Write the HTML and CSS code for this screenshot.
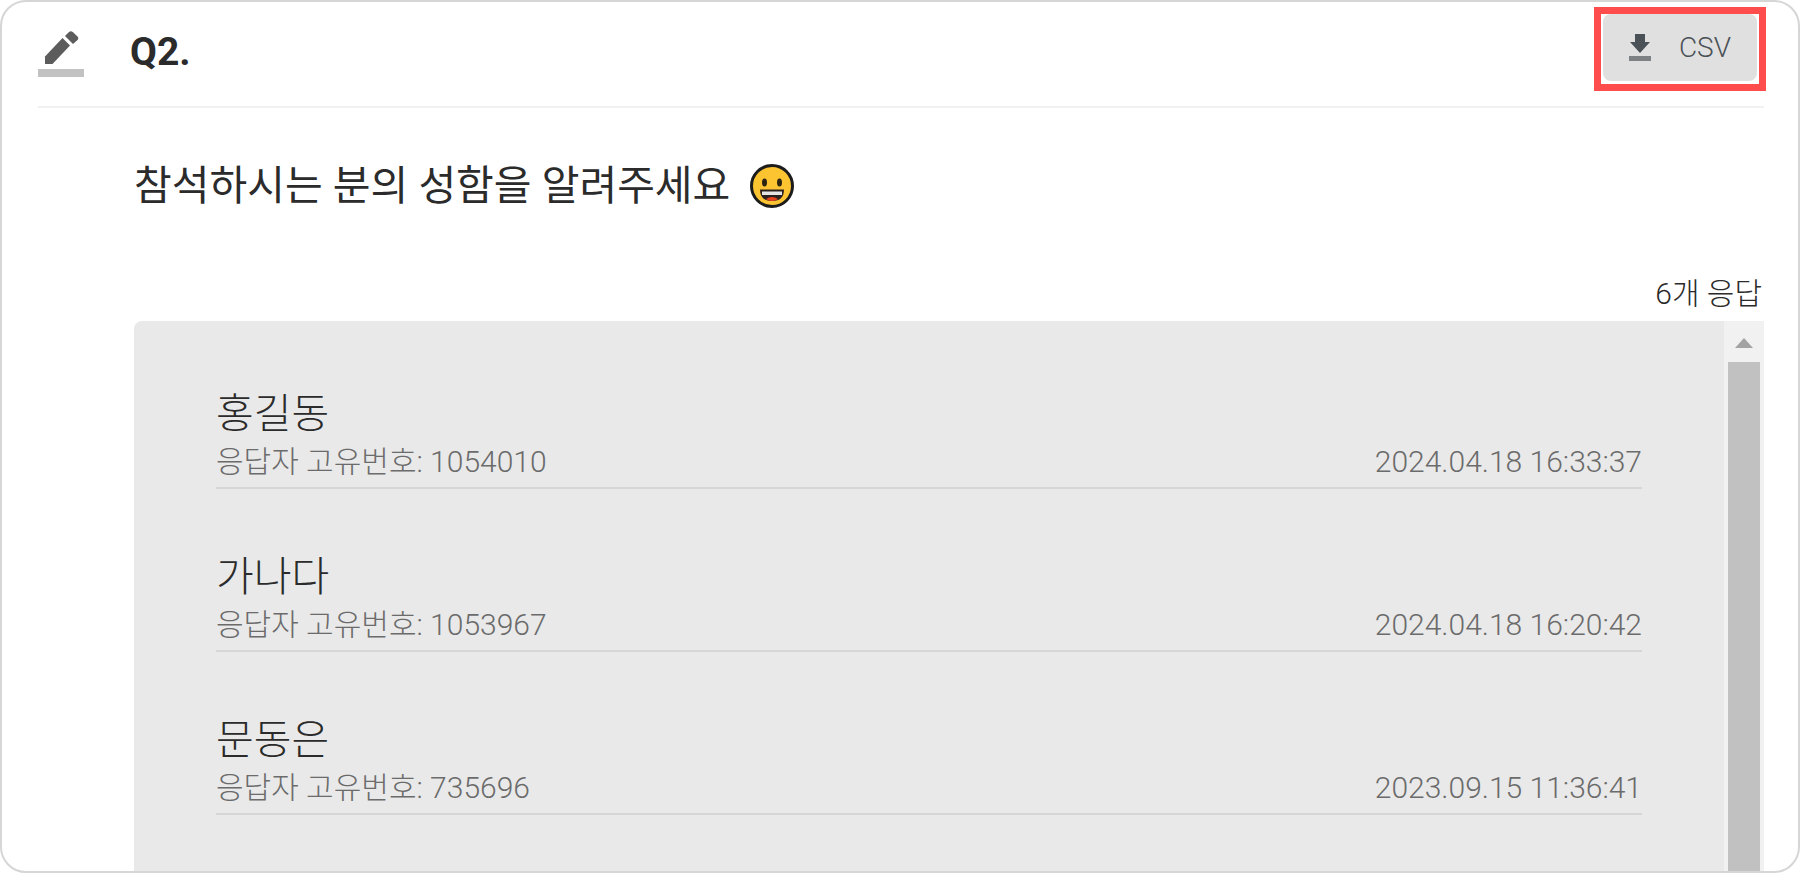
FILE: index.html
```html
<!DOCTYPE html>
<html lang="ko">
<head>
    <meta charset="UTF-8">
    <meta name="viewport" content="width=device-width, initial-scale=1.0">
    <title>Q2. 응답 결과</title>
    <link rel="stylesheet" href="styles.css">
</head>
<body>
    <main class="card">
        <header class="card-header">
            <svg class="type-icon" viewBox="0 0 46 46" aria-hidden="true">
                <path fill="#5c5c5c" d="M7 25.500 24.500 7 32 14.500 14.500 33H7z"/>
                <path fill="#5c5c5c" d="M27 5 31 1Q33 -0.500 35 1.200L39.500 5.500Q41 7.500 39.500 9L35 13z"/>
                <path fill="#c2c2c2" d="M0 38h46v8H0z"/>
            </svg>
            <h1 class="question-no">Q2.</h1>
            <div class="download">
                <button class="btn-csv" type="button">
                    <svg class="download-icon" viewBox="0 0 22 28" aria-hidden="true">
                        <path fill="#4b5257" d="M6 0h10v8h5L11 19 1 8h5z"/>
                        <path fill="#7d8184" d="M0 22h22v5H0z"/>
                    </svg>
                    CSV
                </button>
            </div>
        </header>

        <section class="card-body">
            <h2 class="question">
                참석하시는 분의 성함을 알려주세요
                <svg class="emoji" viewBox="0 0 44 44" role="img" aria-label="웃는 얼굴">
                    <circle cx="22" cy="22" r="20.500" fill="#fdc431" stroke="#1c1c1c" stroke-width="3"/>
                    <ellipse cx="14.500" cy="18.500" rx="2.500" ry="4" fill="#2b2410"/>
                    <ellipse cx="29.500" cy="18.500" rx="2.500" ry="4" fill="#2b2410"/>
                    <path fill="#2b2020" d="M10 25.500h24Q34 37 22 37T10 25.500z"/>
                    <path fill="#e4e4e4" d="M12 27.500h20v3.500H12z"/>
                    <path fill="#e8431f" d="M16 35Q22 31 28 35 26 37 22 37T16 35z"/>
                </svg>
            </h2>
            <p class="count">6개 응답</p>

            <div class="answers">
                <ul class="answer-list">
                    <li class="answer">
                        <p class="name">홍길동</p>
                        <div class="meta">
                            <span>응답자 고유번호: 1054010</span>
                            <time datetime="2024-04-18T16:33:37">2024.04.18 16:33:37</time>
                        </div>
                    </li>
                    <li class="answer">
                        <p class="name">가나다</p>
                        <div class="meta">
                            <span>응답자 고유번호: 1053967</span>
                            <time datetime="2024-04-18T16:20:42">2024.04.18 16:20:42</time>
                        </div>
                    </li>
                    <li class="answer">
                        <p class="name">문동은</p>
                        <div class="meta">
                            <span>응답자 고유번호: 735696</span>
                            <time datetime="2023-09-15T11:36:41">2023.09.15 11:36:41</time>
                        </div>
                    </li>
                </ul>
                <div class="scrollbar" aria-hidden="true">
                    <svg class="scroll-up" viewBox="0 0 18 10">
                        <path fill="#a3a3a3" d="M9 0 18 10H0z"/>
                    </svg>
                    <div class="scroll-thumb"></div>
                </div>
            </div>
        </section>
    </main>
</body>
</html>
```
FILE: styles.css
```css
* {
    box-sizing: border-box;
}
body {
    margin: 0;
    background: #fff;
    color: #2b2b2b;
    font-family: Roboto, "Noto Sans CJK KR", sans-serif;
    font-weight: 300;
}
h1, h2, p, ul {
    margin: 0;
    padding: 0;
}
.card {
    display: flex;
    flex-direction: column;
    height: 100vh;
    padding: 0 34px 0 36px;
    border: 2px solid #d6d6d6;
    border-radius: 26px;
    overflow: hidden;
}

/* 상단 */
.card-header {
    display: flex;
    align-items: center;
    height: 106px;
    padding-right: 7px;
    border-bottom: 2px solid #f1f1f1;
}
.type-icon {
    width: 46px;
    height: 46px;
}
.question-no {
    margin-left: 46px;
    padding-bottom: 4px;
    font-size: 39px;
    line-height: 48px;
    font-weight: 700;
}
.download {
    position: relative;
    align-self: flex-start;
    margin: 12px 0 0 auto;
}
.download::after {
    content: "";
    position: absolute;
    inset: -7px -9px -10px;
    border: 7px solid #ff4d4d;
    pointer-events: none;
}
.btn-csv {
    display: flex;
    align-items: center;
    gap: 28px;
    height: 67px;
    padding: 0 26px;
    border: none;
    border-radius: 8px;
    background: #e0e0e0;
    color: #4b5257;
    font-family: inherit;
    font-size: 28px;
    font-weight: 300;
    cursor: pointer;
}
.btn-csv:hover {
    background: #d5d5d5;
}
.download-icon {
    width: 22px;
    height: 28px;
}

/* 질문 */
.card-body {
    display: flex;
    flex: 1;
    flex-direction: column;
    min-height: 0;
    padding-left: 96px;
}
.question {
    display: flex;
    align-items: center;
    gap: 20px;
    margin-top: 48px;
    font-size: 41px;
    line-height: 60px;
    font-weight: 400;
}
.emoji {
    width: 44px;
    height: 44px;
}
.count {
    margin-top: 56px;
    padding-right: 2px;
    font-size: 30px;
    line-height: 44px;
    text-align: right;
}

/* 응답 목록 */
.answers {
    display: flex;
    flex: 1;
    min-height: 0;
    margin-top: 5px;
    border-radius: 8px 0 0 0;
    background: #e9e9e9;
    overflow: hidden;
}
.answer-list {
    flex: 1;
    padding: 65px 82px 0;
    list-style: none;
}
.answer {
    margin-bottom: 60px;
    padding-bottom: 5px;
    border-bottom: 2px solid #d6d6d6;
}
.name {
    font-size: 41px;
    line-height: 56px;
}
.meta {
    display: flex;
    justify-content: space-between;
    color: #6b6b6b;
    font-size: 30px;
    line-height: 40px;
}
.scrollbar {
    display: flex;
    flex-direction: column;
    align-items: center;
    width: 40px;
    background: #f1f1f1;
}
.scroll-up {
    width: 18px;
    height: 10px;
    margin: 17px 0 14px;
}
.scroll-thumb {
    flex: 1;
    width: 32px;
    background: #c1c1c1;
}
```
